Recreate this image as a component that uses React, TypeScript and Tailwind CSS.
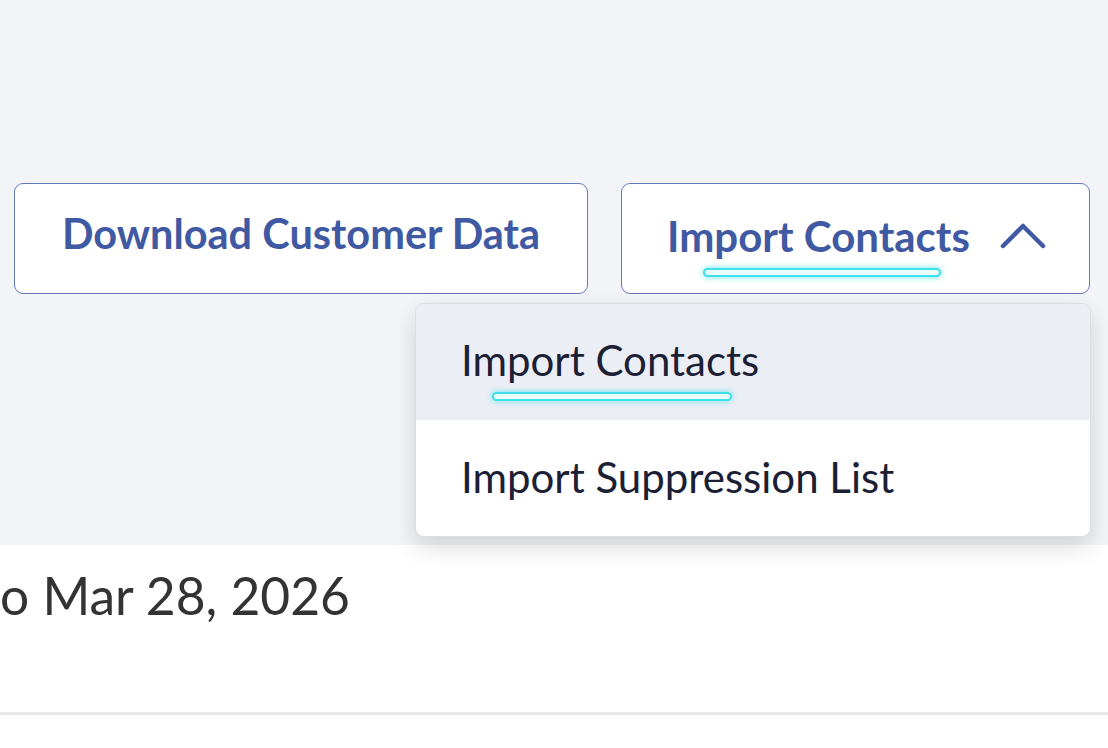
import { useState } from "react";

const Underline = ({ className = "" }: { className?: string }) => (
  <span
    className={`block h-[9px] rounded-full border-2 border-[#3fe0ea] bg-[#e9fdff] shadow-[0_0_6px_rgba(63,224,234,0.8)] ${className}`}
  />
);

function ChevronUp() {
  return (
    <svg width="46" height="30" viewBox="0 0 46 30" fill="none">
      <path
        d="M3 26 L23 6 L43 26"
        stroke="#3f59a2"
        strokeWidth="4.5"
        strokeLinecap="round"
        strokeLinejoin="round"
      />
    </svg>
  );
}

export default function App() {
  const [open] = useState(true);

  return (
    <div className="h-[748px] w-[1108px] overflow-hidden bg-white font-['Lato',sans-serif]">
      {/* Toolbar area */}
      <section className="h-[545px] bg-[#f3f4f8] pl-[14px] pt-[183px]">
        <div className="flex gap-[33px]">
          <button className="flex h-[111px] w-[574px] items-center justify-center rounded-[9px] border-[1.5px] border-[#637ab9] bg-white pb-[10px] text-[41.5px] font-bold text-[#3f59a2]">
            Download Customer Data
          </button>

          <div className="relative">
            <button className="flex h-[111px] w-[469px] items-center rounded-[9px] border-[1.5px] border-[#637ab9] bg-white pb-[4px] pl-[45px] text-[42px] font-bold text-[#3f59a2]">
              <span className="relative">
                Import Contacts
                <Underline className="absolute left-[36px] top-[63px] w-[238px]" />
              </span>
              <span className="mb-[4px] ml-[30px]">
                <ChevronUp />
              </span>
            </button>

            {open && (
              <div className="absolute right-[-1px] top-[120px] z-10 w-[676px] overflow-hidden rounded-[9px] border border-[#dcdde2] bg-white shadow-[0_10px_24px_rgba(0,0,0,0.14)]">
                <div className="flex h-[116px] items-center bg-[#eceef6] pl-[45px] text-[42px] text-[#1b2035]">
                  <span className="relative pb-[4px]">
                    Import Contacts
                    <Underline className="absolute left-[31px] top-[63px] w-[240px]" />
                  </span>
                </div>
                <div className="flex h-[116px] items-center pb-[2px] pl-[45px] text-[42px] text-[#1b2035]">
                  Import Suppression List
                </div>
              </div>
            )}
          </div>
        </div>
      </section>

      {/* Date range */}
      <section className="h-[203px]">
        <div className="pt-[18px] text-[51.5px] leading-[64px] text-[#333333]">
          o Mar 28, 2026
        </div>
        <div className="mt-[85px] border-t-[3px] border-[#e7e7e9]" />
      </section>
    </div>
  );
}
